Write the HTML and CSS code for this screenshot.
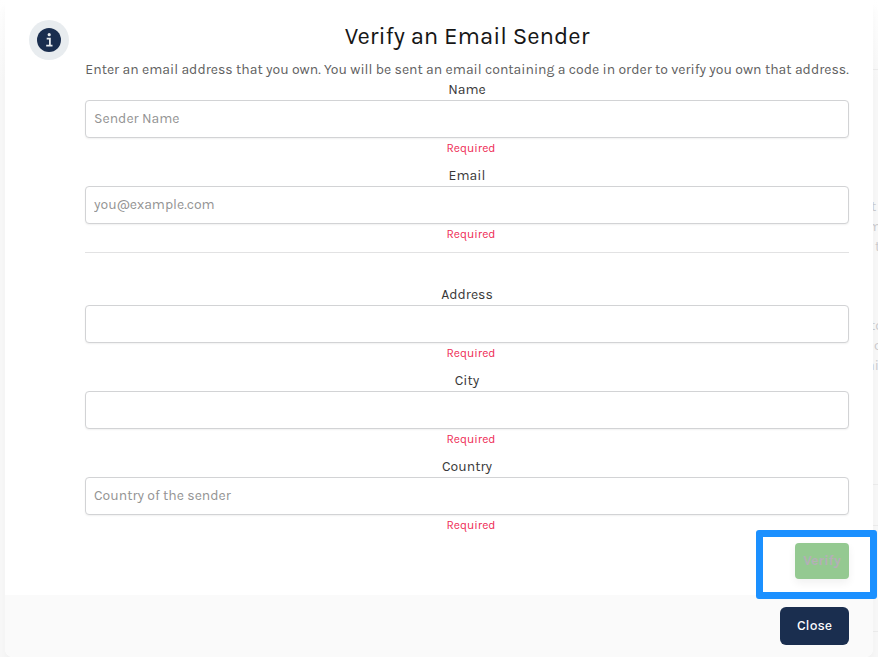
FILE: index.html
```html
<!DOCTYPE html>
<html lang="en">
<head>
<meta charset="utf-8">
<title>Verify an Email Sender</title>
<link rel="stylesheet" href="styles.css">
</head>
<body>
<div class="backdrop">
  <i class="rule r1"></i><i class="rule r2"></i><i class="rule r3"></i><i class="rule r4"></i>
  <p class="behind b1"><span>t</span><span class="out">m</span><span class="in">t</span></p>
  <p class="behind b2"><span>to</span><span class="in">c</span><span class="out">ai</span></p>
</div>
<main class="modal">
  <div class="body">
    <div class="badge">
      <svg width="24" height="24" viewBox="0 0 24 24"><circle cx="12" cy="12" r="12" fill="#1a2e4f"/><circle cx="12.2" cy="6.7" r="1.6" fill="#e8ecef"/><path d="M9.7 10.6h3.2v7M9.2 17.7h6.3" fill="none" stroke="#e8ecef" stroke-width="1.8"/></svg>
    </div>
    <form class="form">
      <h1>Verify an Email Sender</h1>
      <p class="desc">Enter an email address that you own. You will be sent an email containing a code in order to verify you own that address.</p>
      <label class="field"><span class="label">Name</span><input placeholder="Sender Name"><span class="required">Required</span></label>
      <label class="field"><span class="label">Email</span><input placeholder="you@example.com"><span class="required">Required</span></label>
      <hr>
      <label class="field"><span class="label">Address</span><input><span class="required">Required</span></label>
      <label class="field"><span class="label">City</span><input><span class="required">Required</span></label>
      <label class="field"><span class="label">Country</span><input placeholder="Country of the sender"><span class="required">Required</span></label>
      <button type="button" class="verify">Verify</button>
    </form>
  </div>
  <footer class="footer"><button type="button" class="close">Close</button></footer>
</main>
<div class="highlight"></div>
</body>
</html>
```
FILE: styles.css
```css
* { box-sizing: border-box; }
body { margin: 0; width: 878px; height: 657px; overflow: hidden; position: relative; background: #fff; font: 400 14px/20px Karla, Roboto, sans-serif; }
.backdrop { position: absolute; inset: 0; background: linear-gradient(#fff 0, #f8f8f8 80px); }
.rule { position: absolute; left: 873px; width: 5px; height: 1px; background: #ececec; }
.r1 { top: 69px; }
.r2 { top: 484px; }
.r3 { top: 525px; }
.r4 { top: 631px; }
.behind { position: absolute; left: 871px; margin: 0; color: #cbcbce; white-space: nowrap; }
.behind span { display: block; }
.behind .out { margin-left: -3px; }
.behind .in { margin-left: 4px; }
.b1 { top: 197px; }
.b2 { top: 316px; left: 870px; }
.modal { position: relative; width: 868px; height: 657px; margin-left: 5px; background: #fff; border-radius: 0 0 8px 8px; box-shadow: 0 8px 10px rgba(0,0,0,.03); overflow: hidden; display: flex; flex-direction: column; }
.body { display: flex; gap: 16px; height: 595px; padding: 20px 24px 0; }
.badge { flex: none; width: 40px; height: 40px; border-radius: 50%; background: #e8ecef; display: flex; align-items: center; justify-content: center; }
.form { width: 764px; display: flex; flex-direction: column; }
h1 { margin: 0 0 8px; font-size: 24px; font-weight: 400; line-height: 32px; text-align: center; color: #161616; }
.desc { margin: 0; text-align: center; white-space: nowrap; color: #606060; }
.field { display: flex; flex-direction: column; height: 78px; margin-bottom: 8px; text-align: center; }
.label { color: #383838; }
input { flex: none; width: 100%; height: 38px; padding: 0 8px 2px; border: 1px solid #d2d3d5; border-radius: 4px; background: #fff; box-shadow: 0 1px 2px rgba(0,0,0,.06); font: inherit; }
input::placeholder { color: #939393; opacity: 1; }
.required { padding-left: 8px; color: #ee2a54; font-size: 12px; }
hr { width: 100%; height: 1px; margin: 0 0 32px; border: 0; background: #e2e2e3; }
button { border: 0; color: #fff; font: 500 14px/20px Karla, Roboto, sans-serif; padding: 0 0 1px; }
.verify { align-self: flex-end; width: 54px; height: 36px; border-radius: 4px; background: #94c991; color: #b5afb8; font-weight: 700; box-shadow: 0 4px 8px rgba(0,0,0,.06); }
.footer { height: 62px; padding: 12px 24px; display: flex; justify-content: flex-end; background: #fafafa; }
.close { width: 69px; height: 38px; border-radius: 6px; background: #1a2e4f; }
.highlight { position: absolute; left: 756px; top: 530px; width: 121px; height: 69px; border: 7px solid #1b90ff; border-radius: 3px; }
```
